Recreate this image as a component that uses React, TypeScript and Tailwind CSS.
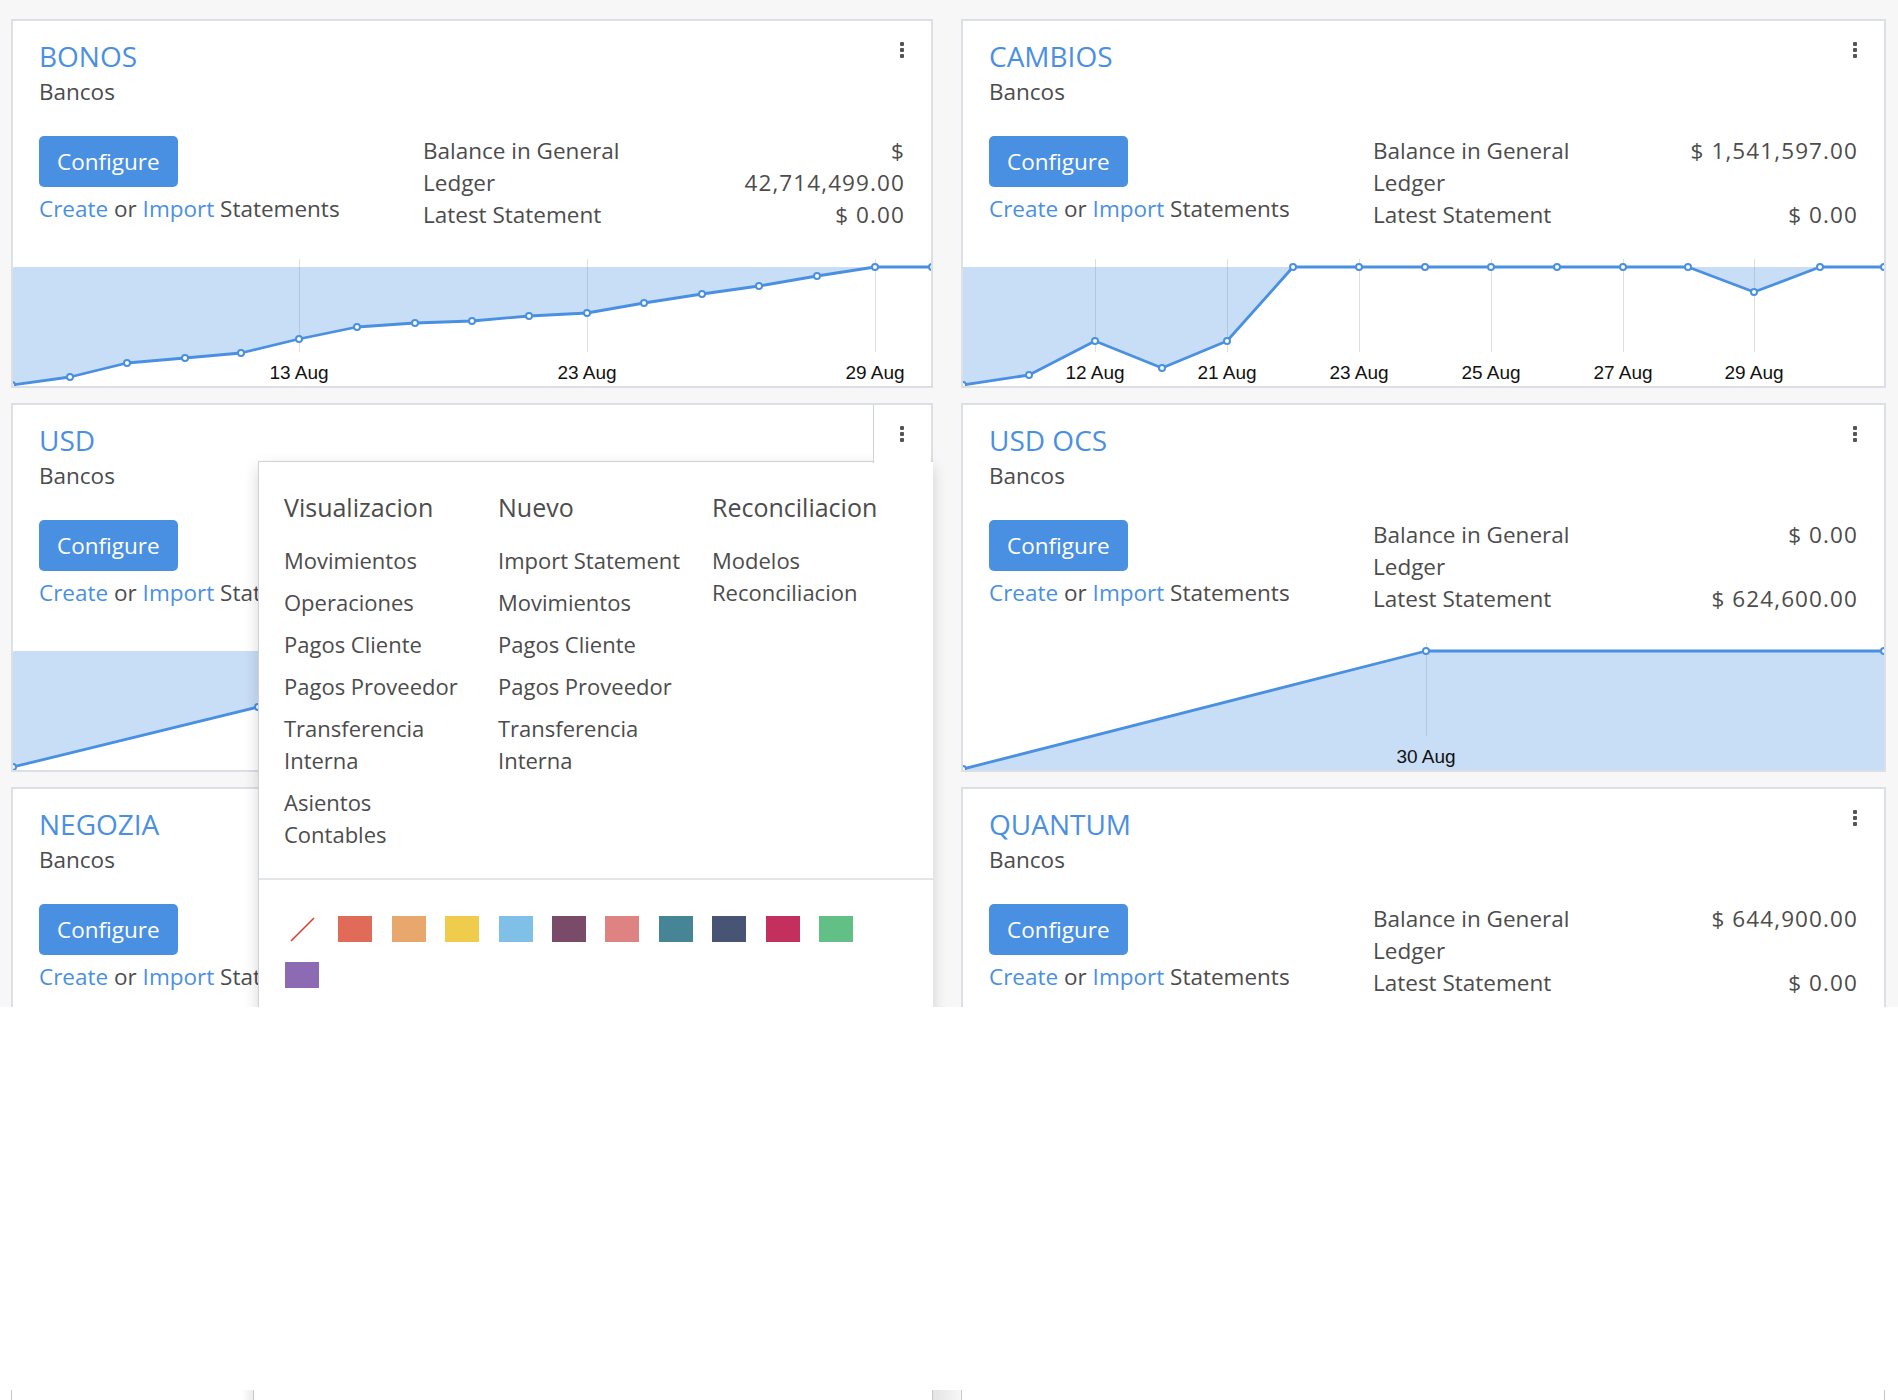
import React from 'react';

const BLUE = '#4a90e2';

type Pt = [number, number];

interface ChartSpec {
    points: Pt[];
    base: number;
    grid: { x: number; label: string }[];
}

interface CardProps {
    title: string;
    width: number;
    balance: string;
    latest: string;
    chart: ChartSpec;
    menuOpen?: boolean;
    covered?: boolean;
}

const Chart: React.FC<{ w: number; spec: ChartSpec }> = ({ w, spec }) => {
    const pts = spec.points;
    const line = pts.map((p) => p.join(',')).join(' ');
    const area = `${line} ${pts[pts.length - 1][0]},${spec.base} ${pts[0][0]},${spec.base}`;
    return (
        <svg width={w} height={127} viewBox={`0 0 ${w} 127`} className="block">
            {spec.grid.map((g) => (
                <line key={'g' + g.label} x1={g.x + 0.5} x2={g.x + 0.5} y1={0} y2={93} stroke="#dedede" strokeWidth={1} />
            ))}
            <polygon points={area} fill="rgba(74,144,226,0.3)" />
            <polyline points={line} fill="none" stroke={BLUE} strokeWidth={2.8} strokeLinejoin="round" />
            {pts.map(([x, y], i) => (
                <circle key={i} cx={x} cy={y} r={3} fill="#fff" stroke={BLUE} strokeWidth={2} />
            ))}
            {spec.grid.map((g) => (
                <text
                    key={'t' + g.label}
                    x={g.x}
                    y={120}
                    textAnchor="middle"
                    fontSize={19}
                    fontFamily="'Liberation Sans', Arial, sans-serif"
                    fill="#111"
                >
                    {g.label}
                </text>
            ))}
        </svg>
    );
};

const Kebab = () => (
    <div className="flex flex-col gap-[2px]">
        <span className="w-[4px] h-[4px] rounded-[1px] bg-[#555]" />
        <span className="w-[4px] h-[4px] rounded-[1px] bg-[#555]" />
        <span className="w-[4px] h-[4px] rounded-[1px] bg-[#555]" />
    </div>
);

const menuCols = [
    {
        title: 'Visualizacion',
        items: ['Movimientos', 'Operaciones', 'Pagos Cliente', 'Pagos Proveedor', 'Transferencia\nInterna', 'Asientos\nContables'],
    },
    {
        title: 'Nuevo',
        items: ['Import Statement', 'Movimientos', 'Pagos Cliente', 'Pagos Proveedor', 'Transferencia\nInterna'],
    },
    {
        title: 'Reconciliacion',
        items: ['Modelos\nReconciliacion'],
    },
];

const swatches = [
    '#e06b58', '#e8a86d', '#f0cc4c', '#7fbfe8', '#7a4b68', '#de8382',
    '#468595', '#475474', '#c4305e', '#62bf86', '#8c6bb4',
];

const ManageMenu = () => (
    <>
        <div className="absolute left-[860px] top-0 right-0 h-[58px] bg-white border-l border-[#cfd2d6] z-20 pl-[26px] pt-[21px]">
            <Kebab />
        </div>
        <div className="absolute left-[245px] top-[56px] right-[-2px] h-[700px] bg-white border-l border-t border-[#cfd2d6] shadow-[0_6px_14px_rgba(0,0,0,0.16)] z-10 text-[#4c4c4c]">
            <div className="pl-[25px] pt-[28px] grid grid-cols-[214px_214px_214px]">
                {menuCols.map((c) => (
                    <div key={c.title}>
                        <div className="text-[25px] leading-[34px]">{c.title}</div>
                        <div className="mt-[15px]">
                            {c.items.map((it, i) => (
                                <div key={i} className="py-[5px] text-[22px] leading-[32px] whitespace-pre">
                                    {it}
                                </div>
                            ))}
                        </div>
                    </div>
                ))}
            </div>
            <div className="mt-[23px] border-t-2 border-[#e3e6e9]" />
            <div className="pl-[26px] pt-[36px] w-[620px] flex flex-wrap gap-x-[19.4px] gap-y-[20px]">
                <div className="w-[34px] h-[26px]">
                    <svg width="34" height="26" viewBox="0 0 34 26">
                        <line x1="6" y1="25" x2="29" y2="2" stroke="#e53b2c" strokeWidth="1.6" />
                    </svg>
                </div>
                {swatches.map((s) => (
                    <div key={s} className="w-[34px] h-[26px]" style={{ backgroundColor: s }} />
                ))}
            </div>
        </div>
    </>
);

const Card: React.FC<CardProps> = ({ title, width, balance, latest, chart, menuOpen, covered }) => (
    <div className="relative h-[369px] bg-white border-2 border-[#dcdfe3] flex flex-col text-[#4c4c4c]">
        <div className="px-[26px] pt-[15px]">
            <div className="text-[28px] leading-[40px] text-[#4a90e2]">{title}</div>
            <div className="text-[22.5px] leading-[32px]">Bancos</div>
            <div className="mt-[27px] grid grid-cols-[384px_1fr] text-[22.5px]">
                <div>
                    <div className="mt-[1px] inline-flex items-center h-[51px] px-[18px] rounded-[5px] bg-[#4a90e2] text-white">
                        Configure
                    </div>
                    <div className={`mt-[6px] leading-[32px] whitespace-nowrap ${covered ? 'w-[219px] overflow-hidden' : ''}`}>
                        <span className="text-[#4a90e2]">Create</span> or{' '}
                        <span className="text-[#4a90e2]">Import</span> Statements
                    </div>
                </div>
                {!covered && (
                    <div className="grid grid-cols-[216px_1fr] gap-x-[50px] leading-[32px]">
                        <div className="whitespace-pre">{'Balance in General\nLedger'}</div>
                        <div className="text-right whitespace-pre tracking-[1.1px]">{balance}</div>
                        <div className="whitespace-nowrap">Latest Statement</div>
                        <div className="text-right whitespace-nowrap tracking-[1.1px]">{latest}</div>
                    </div>
                )}
            </div>
        </div>
        <div className="mt-auto">
            <Chart w={width - 4} spec={chart} />
        </div>
        {menuOpen ? (
            <ManageMenu />
        ) : (
            <div className="absolute top-[21px] right-[27px]">
                <Kebab />
            </div>
        )}
    </div>
);

const flat: ChartSpec = { points: [[0, 8], [918, 8]], base: 127, grid: [] };

export default function App() {
    return (
        <div className="w-[1898px] h-[1400px] bg-white flex flex-col font-['Open_Sans',sans-serif]">
            <div className="h-[1007px] overflow-hidden bg-[#f7f7f7] pt-[19px] pl-[11px]">
                <div className="grid grid-cols-[922px_925px] gap-x-[28px] gap-y-[15px]">
                    <Card
                        title="BONOS"
                        width={922}
                        balance={'$\n42,714,499.00'}
                        latest="$ 0.00"
                        chart={{
                            points: [
                                [-1, 126], [57, 118], [114, 104], [172, 99], [228, 94], [286, 80], [344, 68],
                                [402, 64], [459, 62], [516, 57], [574, 54], [631, 44], [689, 35], [746, 27],
                                [804, 17], [862, 8], [919, 8],
                            ],
                            base: 8,
                            grid: [
                                { x: 286, label: '13 Aug' },
                                { x: 574, label: '23 Aug' },
                                { x: 862, label: '29 Aug' },
                            ],
                        }}
                    />
                    <Card
                        title="CAMBIOS"
                        width={925}
                        balance="$ 1,541,597.00"
                        latest="$ 0.00"
                        chart={{
                            points: [
                                [0, 126], [66, 116], [132, 82], [199, 109], [264, 82], [330, 8], [396, 8],
                                [462, 8], [528, 8], [594, 8], [660, 8], [725, 8], [791, 33], [857, 8], [921, 8],
                            ],
                            base: 8,
                            grid: [
                                { x: 132, label: '12 Aug' },
                                { x: 264, label: '21 Aug' },
                                { x: 396, label: '23 Aug' },
                                { x: 528, label: '25 Aug' },
                                { x: 660, label: '27 Aug' },
                                { x: 791, label: '29 Aug' },
                            ],
                        }}
                    />
                    <Card
                        title="USD"
                        width={922}
                        balance="$ 0.00"
                        latest="$ 0.00"
                        menuOpen
                        covered
                        chart={{
                            points: [[0, 124], [245, 64], [490, 40], [735, 20], [918, 8]],
                            base: 8,
                            grid: [],
                        }}
                    />
                    <Card
                        title="USD OCS"
                        width={925}
                        balance="$ 0.00"
                        latest="$ 624,600.00"
                        chart={{
                            points: [[0, 126], [463, 8], [921, 8]],
                            base: 127,
                            grid: [{ x: 463, label: '30 Aug' }],
                        }}
                    />
                    <Card title="NEGOZIA" width={922} balance="$ 0.00" latest="$ 0.00" chart={flat} covered />
                    <Card title="QUANTUM" width={925} balance="$ 644,900.00" latest="$ 0.00" chart={flat} />
                </div>
            </div>
            <div className="flex-1" />
            <div className="h-[10px] flex">
                <div className="ml-[11px] w-[231px] border-l border-[#c8c8c8]" />
                <div className="w-[12px] border-r border-[#c8c8c8] bg-gradient-to-r from-white to-[#ececec]" />
                <div className="w-[678px]" />
                <div className="w-[30px] border-l border-r border-[#c8c8c8] bg-gradient-to-r from-[#e4e4e4] to-[#f7f7f7]" />
                <div className="w-[923px] border-r border-[#c8c8c8]" />
            </div>
        </div>
    );
}
